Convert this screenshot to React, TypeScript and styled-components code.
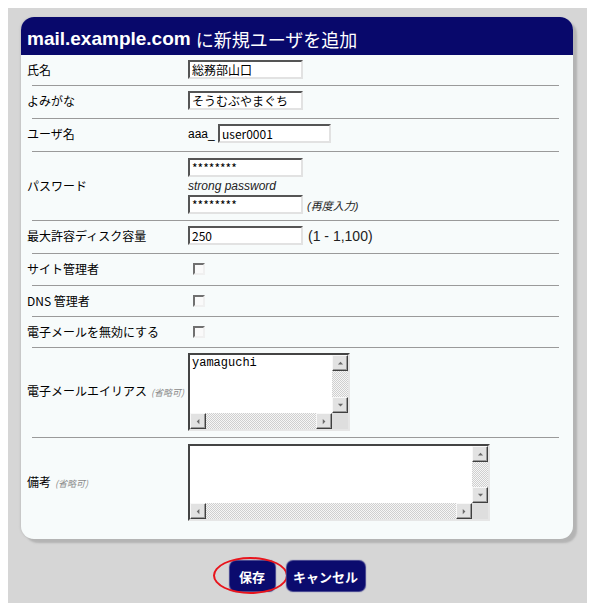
import styled, { createGlobalStyle } from "styled-components";

const GlobalStyle = createGlobalStyle`
  body {
    margin: 8px;
    background: #ffffff;
    font-family: "Noto Sans CJK JP", "Noto Sans", sans-serif;
  }
`;

const Backdrop = styled.div`
  background: #d6d6d6;
  padding: 9px 14px 12px 13px;
`;

const Panel = styled.div`
  background: #f7fbfb;
  border-radius: 13px;
  overflow: hidden;
  box-shadow: 4px 4px 2px #b4b4b4, -1px 0 2px #c4c4c4;
  padding-bottom: 14px;
`;

const Header = styled.h1`
  margin: 0;
  height: 38px;
  background: #08086b;
  color: #fff;
  display: flex;
  align-items: flex-end;
  padding: 0 0 4px 6px;
  box-sizing: border-box;
  font-weight: normal;
  gap: 5px;
`;

const Domain = styled.span`
  font-family: "Liberation Sans", Arial, sans-serif;
  font-weight: bold;
  font-size: 19px;
  line-height: 24px;
`;

const HeaderRest = styled.span`
  font-family: "Noto Sans CJK JP", sans-serif;
  font-size: 18px;
  line-height: 24px;
`;

const Row = styled.div<{ $pad?: string }>`
  display: grid;
  grid-template-columns: 161px 1fr;
  align-items: center;
  padding: ${(p) => p.$pad ?? "5px 0 8px"};
  margin-left: 6px;
  font-size: 12px;
  color: #000;
`;

const Divider = styled.hr`
  margin: 0 14px 0 11px;
  border: 0;
  border-top: 1px solid #9a9a9a;
  height: 0;
`;

const Label = styled.div`
  font-size: 12px;
  line-height: 16px;
  white-space: nowrap;
`;

const Optional = styled.span`
  font-size: 9px;
  font-style: italic;
  color: #8a8a8a;
  margin-left: 4px;
`;

const Field = styled.div`
  display: flex;
  align-items: center;
`;

const Stack = styled.div`
  display: flex;
  flex-direction: column;
`;

const TextInput = styled.input<{ $w: number }>`
  width: ${(p) => p.$w}px;
  height: 19px;
  box-sizing: border-box;
  border: 2px solid;
  border-color: #555 #e2e2e2 #e2e2e2 #555;
  background: #fff;
  padding: 0 2px;
  font-family: "Noto Sans CJK JP", sans-serif;
  font-size: 12px;
  color: #000;
  outline: none;
`;

const Prefix = styled.span`
  font-family: "Liberation Sans", Arial, sans-serif;
  font-size: 12px;
  width: 30px;
`;

const Hint = styled.div`
  font-family: "Liberation Sans", Arial, sans-serif;
  font-style: italic;
  font-size: 12px;
  line-height: 18px;
  color: #222;
`;

const Note = styled.span<{ $big?: boolean }>`
  margin-left: ${(p) => (p.$big ? "5px" : "4px")};
  font-family: "Liberation Sans", "Noto Sans CJK JP", sans-serif;
  font-size: ${(p) => (p.$big ? "14px" : "11px")};
  font-style: ${(p) => (p.$big ? "normal" : "italic")};
  color: #222;
`;

const Check = styled.input.attrs({ type: "checkbox" })`
  appearance: none;
  margin: 0 0 0 5px;
  width: 12px;
  height: 12px;
  border: 2px solid;
  border-color: #707070 #f0f0f0 #f0f0f0 #707070;
  background: #fafafa;
`;

const AreaBox = styled.div<{ $w: number; $h: number }>`
  width: ${(p) => p.$w}px;
  height: ${(p) => p.$h}px;
  box-sizing: border-box;
  border: 2px solid;
  border-color: #444 #e6e6e6 #e6e6e6 #444;
  display: grid;
  grid-template-columns: 1fr 16px;
  grid-template-rows: 1fr 16px;
  background: #fff;
`;

const AreaText = styled.textarea`
  border: 0;
  resize: none;
  overflow: hidden;
  padding: 1px 2px;
  margin: 0;
  font-family: "Liberation Mono", "DejaVu Sans Mono", monospace;
  font-size: 12px;
  line-height: 14px;
  color: #000;
  background: #fff;
  outline: none;
`;

const Bar = styled.div<{ $dir: "row" | "column" }>`
  display: flex;
  flex-direction: ${(p) => p.$dir};
`;

const Track = styled.div`
  flex: 1;
  background-color: #f4f4f4;
  background-image: repeating-conic-gradient(#cfcfcf 0 25%, #f6f6f6 0 50%);
  background-size: 2px 2px;
`;

const ArrowBtn = styled.div`
  width: 16px;
  height: 16px;
  box-sizing: border-box;
  background: #e2e2e2;
  border: 1px solid;
  border-color: #f8f8f8 #404040 #404040 #f8f8f8;
  box-shadow: inset -1px -1px 0 #9a9a9a;
  display: grid;
  place-items: center;
`;

const Corner = styled.div`
  background: #dedede;
`;

const Buttons = styled.div`
  display: flex;
  justify-content: center;
  gap: 12px;
  padding-top: 22px;
`;

const Btn = styled.button<{ $w: number }>`
  position: relative;
  width: ${(p) => p.$w}px;
  height: 30px;
  border: 0;
  border-radius: 6px;
  background: #0b0b6e;
  box-shadow: 0 0 1px 1px #3a3a8a;
  color: #fff;
  font-family: "Noto Sans CJK JP", sans-serif;
  font-weight: bold;
  font-size: 13px;
  padding: 0;
`;

const Circle = styled.span`
  position: absolute;
  left: -17px;
  top: -4px;
  width: 75px;
  height: 37px;
  box-sizing: border-box;
  border: 2px solid #e8141c;
  border-radius: 50%;
  pointer-events: none;
`;

type Dir = "up" | "down" | "left" | "right";

function Arrow({ dir }: { dir: Dir }) {
  const pts: Record<Dir, string> = {
    up: "1,5 4,2 7,5",
    down: "1,2 4,5 7,2",
    left: "5,1 2,4 5,7",
    right: "2,1 5,4 2,7",
  };
  return (
    <svg width="7" height="7" viewBox="0 0 8 8">
      <polygon points={pts[dir]} fill="#6a6a6a" />
    </svg>
  );
}

function TextArea({ w, h, value }: { w: number; h: number; value: string }) {
  return (
    <AreaBox $w={w} $h={h}>
      <AreaText defaultValue={value} />
      <Bar $dir="column">
        <ArrowBtn>
          <Arrow dir="up" />
        </ArrowBtn>
        <Track />
        <ArrowBtn>
          <Arrow dir="down" />
        </ArrowBtn>
      </Bar>
      <Bar $dir="row">
        <ArrowBtn>
          <Arrow dir="left" />
        </ArrowBtn>
        <Track />
        <ArrowBtn>
          <Arrow dir="right" />
        </ArrowBtn>
      </Bar>
      <Corner />
    </AreaBox>
  );
}

export default function App() {
  return (
    <>
      <GlobalStyle />
      <Backdrop>
        <Panel>
          <Header>
            <Domain>mail.example.com</Domain>
            <HeaderRest>に新規ユーザを追加</HeaderRest>
          </Header>

          <Row $pad="5px 0 6px">
            <Label>氏名</Label>
            <TextInput $w={115} defaultValue="総務部山口" />
          </Row>
          <Divider />
          <Row>
            <Label>よみがな</Label>
            <TextInput $w={115} defaultValue="そうむぶやまぐち" />
          </Row>
          <Divider />
          <Row>
            <Label>ユーザ名</Label>
            <Field>
              <Prefix>aaa_</Prefix>
              <TextInput $w={113} defaultValue="user0001" />
            </Field>
          </Row>
          <Divider />
          <Row $pad="6px 0 6px">
            <Label>パスワード</Label>
            <Stack>
              <TextInput $w={115} type="text" defaultValue="********" />
              <Hint>strong password</Hint>
              <Field>
                <TextInput $w={115} type="text" defaultValue="********" />
                <Note>(再度入力)</Note>
              </Field>
            </Stack>
          </Row>
          <Divider />
          <Row>
            <Label>最大許容ディスク容量</Label>
            <Field>
              <TextInput $w={115} defaultValue="250" />
              <Note $big>(1 - 1,100)</Note>
            </Field>
          </Row>
          <Divider />
          <Row $pad="7px 0 8px">
            <Label>サイト管理者</Label>
            <Field>
              <Check />
            </Field>
          </Row>
          <Divider />
          <Row $pad="7px 0 7px">
            <Label>DNS 管理者</Label>
            <Field>
              <Check />
            </Field>
          </Row>
          <Divider />
          <Row $pad="7px 0 7px">
            <Label>電子メールを無効にする</Label>
            <Field>
              <Check />
            </Field>
          </Row>
          <Divider />
          <Row $pad="5px 0 6px">
            <Label>
              電子メールエイリアス<Optional>(省略可)</Optional>
            </Label>
            <TextArea w={162} h={78} value="yamaguchi" />
          </Row>
          <Divider />
          <Row $pad="6px 0 4px">
            <Label>
              備考<Optional>(省略可)</Optional>
            </Label>
            <TextArea w={302} h={77} value="" />
          </Row>
        </Panel>

        <Buttons>
          <Btn $w={45}>
            保存
            <Circle />
          </Btn>
          <Btn $w={78}>キャンセル</Btn>
        </Buttons>
      </Backdrop>
    </>
  );
}
